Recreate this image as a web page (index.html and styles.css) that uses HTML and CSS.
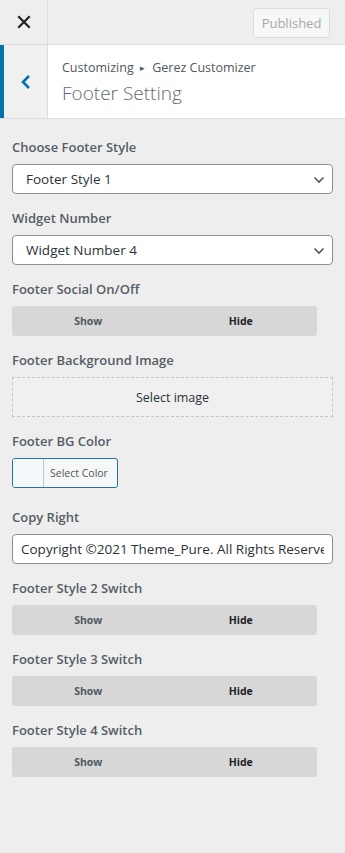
FILE: index.html
```html
<!DOCTYPE html>
<html>
<head>
<meta charset="utf-8">
<link rel="stylesheet" href="styles.css">
</head>
<body>
<div class="panel">
  <div class="topbar">
    <div class="close">
      <svg width="14" height="14" viewBox="0 0 14 14"><path d="M2 2L12 12M12 2L2 12" stroke="#1d2327" stroke-width="2.2" stroke-linecap="square"/></svg>
    </div>
    <div class="topbar-right">
      <button class="published">Published</button>
    </div>
  </div>
  <div class="section-head">
    <div class="back">
      <svg width="12" height="16" viewBox="0 0 12 16"><path d="M9 2L3 8L9 14" fill="none" stroke="#0073aa" stroke-width="2.6"/></svg>
    </div>
    <div class="titles">
      <div class="crumb">Customizing <span class="arrow">▸</span> Gerez Customizer</div>
      <div class="title">Footer Setting</div>
    </div>
  </div>
  <div class="controls">
    <div class="control">
      <div class="label">Choose Footer Style</div>
      <div class="select">Footer Style 1<svg class="chev" width="12" height="8" viewBox="0 0 12 8"><path d="M1.5 1.5L6 6L10.5 1.5" fill="none" stroke="#50575e" stroke-width="1.6"/></svg></div>
    </div>
    <div class="control">
      <div class="label">Widget Number</div>
      <div class="select">Widget Number 4<svg class="chev" width="12" height="8" viewBox="0 0 12 8"><path d="M1.5 1.5L6 6L10.5 1.5" fill="none" stroke="#50575e" stroke-width="1.6"/></svg></div>
    </div>
    <div class="control">
      <div class="label">Footer Social On/Off</div>
      <div class="toggle"><span class="show">Show</span><span class="hide">Hide</span></div>
    </div>
    <div class="control">
      <div class="label">Footer Background Image</div>
      <div class="image-select">Select image</div>
    </div>
    <div class="control">
      <div class="label">Footer BG Color</div>
      <div class="color-btn"><span class="swatch"></span><span class="color-text">Select Color</span></div>
    </div>
    <div class="control copy">
      <div class="label">Copy Right</div>
      <input class="input" type="text" value="Copyright ©2021 Theme_Pure. All Rights Reserved.">
    </div>
    <div class="control">
      <div class="label">Footer Style 2 Switch</div>
      <div class="toggle"><span class="show">Show</span><span class="hide">Hide</span></div>
    </div>
    <div class="control">
      <div class="label">Footer Style 3 Switch</div>
      <div class="toggle"><span class="show">Show</span><span class="hide">Hide</span></div>
    </div>
    <div class="control">
      <div class="label">Footer Style 4 Switch</div>
      <div class="toggle"><span class="show">Show</span><span class="hide">Hide</span></div>
    </div>
  </div>
</div>
</body>
</html>
```
FILE: styles.css
```css
html, body {
  margin: 0;
  padding: 0;
  background: #eeeeee;
  font-family: "Open Sans", "Noto Sans", sans-serif;
  color: #50575e;
}
.panel {
  width: 345px;
  min-height: 853px;
  background: #eeeeee;
}
.topbar {
  display: flex;
  height: 44px;
  border-bottom: 1px solid #dcdcde;
  background: #eeeeee;
}
.close {
  width: 47px;
  border-right: 1px solid #dcdcde;
  display: flex;
  align-items: center;
  justify-content: center;
}
.topbar-right {
  flex: 1;
  display: flex;
  justify-content: flex-end;
  align-items: center;
  padding-right: 15px;
}
.published {
  font-family: inherit;
  font-size: 13px;
  color: #a7aaad;
  background: #f6f7f7;
  border: 1px solid #dcdcde;
  border-radius: 3px;
  height: 30px;
  width: 77px;
  padding: 0;
  margin-top: 1px;
}
.section-head {
  display: flex;
  height: 73px;
  background: #ffffff;
  border-bottom: 1px solid #dcdcde;
}
.back {
  width: 43px;
  border-left: 4px solid #0073aa;
  border-right: 1px solid #dcdcde;
  background: #f0f0f1;
  display: flex;
  align-items: center;
  justify-content: center;
}
.titles {
  padding: 14px 0 0 14px;
}
.crumb {
  font-size: 12.5px;
  color: #50575e;
  line-height: 18px;
}
.arrow {
  font-size: 9px;
  margin: 0 4px 0 3px;
  vertical-align: 1px;
}
.title {
  font-size: 19px;
  color: #646970;
  line-height: 26px;
  margin-top: 3px;
  font-weight: 300;
}
.controls {
  padding: 19px 12px 0 12px;
}
.control {
  margin-bottom: 15px;
}
.label {
  font-size: 13px;
  font-weight: 600;
  color: #555d66;
  line-height: 18px;
  margin-bottom: 8px;
}
.select {
  position: relative;
  height: 28px;
  border: 1px solid #8c8f94;
  border-radius: 4px;
  background: #fff;
  font-size: 13.5px;
  color: #2c3338;
  line-height: 28px;
  padding-left: 13px;
}
.chev {
  position: absolute;
  right: 7px;
  top: 11px;
}
.toggle {
  width: 305px;
  height: 30px;
  background: #d7d7d7;
  border-radius: 3px;
  display: flex;
  align-items: center;
  font-size: 10.5px;
  font-weight: 700;
}
.toggle span {
  flex: 1;
  text-align: center;
}
.show { color: #50575e; }
.hide { color: #1d2327; }
.image-select {
  height: 38px;
  border: 1px dashed #c3c4c7;
  background: #f0f0f1;
  display: flex;
  align-items: center;
  justify-content: center;
  font-size: 12.5px;
  color: #2c3338;
}
.color-btn {
  display: flex;
  width: 104px;
  height: 28px;
  border: 1px solid #2271b1;
  border-radius: 3px;
  background: #f6f7f7;
  overflow: hidden;
}
.swatch {
  width: 30px;
  background: #f6f9fc;
  border-right: 1px solid #c3c4c7;
}
.color-text {
  flex: 1;
  font-size: 10.5px;
  color: #50575e;
  line-height: 28px;
  padding-left: 6px;
}
.copy {
  margin-top: 20px;
}
.input {
  display: block;
  box-sizing: border-box;
  width: 100%;
  height: 30px;
  margin: 0;
  border: 1px solid #8c8f94;
  border-radius: 4px;
  background: #fff;
  font-family: inherit;
  font-size: 13.5px;
  color: #2c3338;
  padding: 0 8px;
  outline: none;
}
```
